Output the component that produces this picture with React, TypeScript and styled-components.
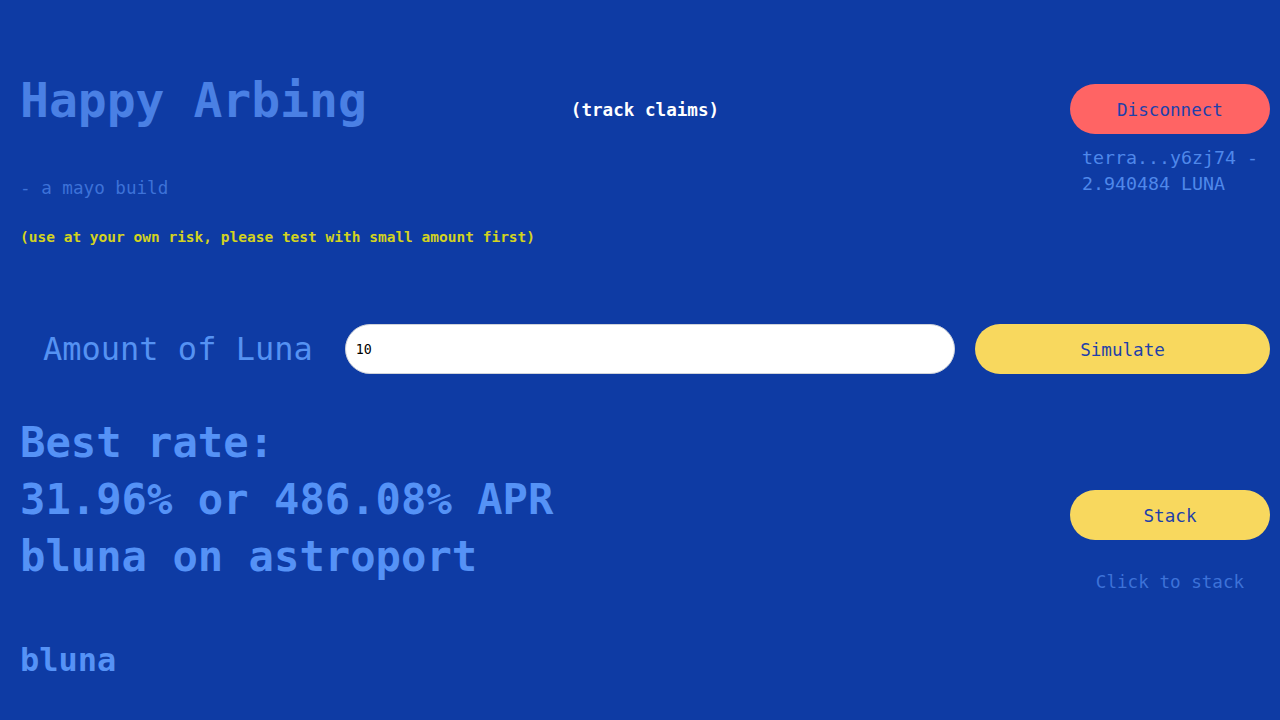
import React from "react";
import styled, { createGlobalStyle } from "styled-components";

const Global = createGlobalStyle`
  html, body { margin: 0; padding: 0; background: #0e3ba4; }
  body { font-family: "DejaVu Sans Mono", "Liberation Mono", monospace; }
  * { box-sizing: border-box; }
`;

const Page = styled.div`
  width: 1280px;
  min-height: 720px;
  background: #0e3ba4;
  padding: 72px 10px 0 20px;
`;

const Header = styled.header`
  display: grid;
  grid-template-columns: 1fr auto 1fr;
  align-items: start;
`;

const Brand = styled.div`
  display: flex;
  flex-direction: column;
  align-items: flex-start;
`;

const Title = styled.h1`
  margin: 0;
  font-size: 48px;
  line-height: 56px;
  font-weight: 700;
  color: #4a80e4;
  white-space: nowrap;
`;

const Subtitle = styled.div`
  margin-top: 50px;
  font-size: 17.6px;
  line-height: 20px;
  color: #3d72d8;
`;

const Warning = styled.div`
  margin-top: 30px;
  font-size: 14.5px;
  line-height: 18px;
  font-weight: 700;
  color: #d3d31e;
  white-space: nowrap;
`;

const TrackLink = styled.a`
  margin-top: 28px;
  font-size: 17.6px;
  line-height: 20px;
  font-weight: 700;
  color: #ffffff;
  text-decoration: none;
  cursor: pointer;
`;

const Account = styled.div`
  justify-self: end;
  width: 200px;
  display: flex;
  flex-direction: column;
`;

const PillButton = styled.button<{ $tone: "red" | "yellow"; $width?: number }>`
  width: ${(p) => (p.$width ? `${p.$width}px` : "100%")};
  height: 50px;
  border: none;
  border-radius: 25px;
  background: ${(p) => (p.$tone === "red" ? "#ff6464" : "#f8d85e")};
  color: #1e40aa;
  font-family: "DejaVu Sans Mono", monospace;
  font-size: 17.6px;
  padding: 2px 0 0;
  cursor: pointer;
  flex-shrink: 0;
`;

const Disconnect = styled(PillButton)`
  margin-top: 12px;
`;

const Wallet = styled.div`
  margin-top: 11px;
  padding: 0 10px 0 12px;
  font-size: 18.3px;
  line-height: 26px;
  color: #4f88ea;
`;

const AmountRow = styled.div`
  margin-top: 78px;
  display: flex;
  align-items: center;
  gap: 20px;
  height: 50px;
`;

const AmountLabel = styled.label`
  padding: 0 12px 0 23px;
  font-size: 32px;
  line-height: 38px;
  color: #5592f2;
  white-space: nowrap;
`;

const AmountInput = styled.input`
  flex: 1;
  height: 50px;
  border: 1px solid #cfd3da;
  border-radius: 25px;
  background: #ffffff;
  padding: 0 10px;
  font-family: "DejaVu Sans Mono", monospace;
  font-size: 13.33px;
  color: #000;
  outline: none;
`;

const Results = styled.section`
  margin-top: 40px;
  display: flex;
  justify-content: space-between;
  align-items: flex-start;
`;

const RateBlock = styled.div`
  font-size: 42.2px;
  line-height: 57px;
  font-weight: 700;
  color: #5592f6;
`;

const StackCol = styled.div`
  width: 200px;
  padding-top: 76px;
  display: flex;
  flex-direction: column;
  align-items: center;
`;

const Hint = styled.div`
  margin-top: 32px;
  font-size: 17.6px;
  line-height: 20px;
  color: #3d72d8;
`;

const TokenHeading = styled.h3`
  margin: 49px 0 0;
  font-size: 32px;
  line-height: 38px;
  font-weight: 700;
  color: #5592f6;
`;

export default function App() {
  return (
    <>
      <Global />
      <Page>
        <Header>
          <Brand>
            <Title>Happy Arbing</Title>
            <Subtitle>- a mayo build</Subtitle>
            <Warning>(use at your own risk, please test with small amount first)</Warning>
          </Brand>
          <TrackLink>(track claims)</TrackLink>
          <Account>
            <Disconnect $tone="red">Disconnect</Disconnect>
            <Wallet>terra...y6zj74 - 2.940484 LUNA</Wallet>
          </Account>
        </Header>

        <AmountRow>
          <AmountLabel htmlFor="amount">Amount of Luna</AmountLabel>
          <AmountInput id="amount" defaultValue="10" />
          <PillButton $tone="yellow" $width={295}>Simulate</PillButton>
        </AmountRow>

        <Results>
          <RateBlock>
            <div>Best rate:</div>
            <div>31.96% or 486.08% APR</div>
            <div>bluna on astroport</div>
          </RateBlock>
          <StackCol>
            <PillButton $tone="yellow">Stack</PillButton>
            <Hint>Click to stack</Hint>
          </StackCol>
        </Results>

        <TokenHeading>bluna</TokenHeading>
      </Page>
    </>
  );
}
